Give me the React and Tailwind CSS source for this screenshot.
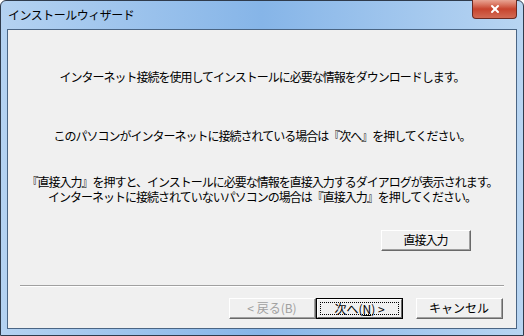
import { X } from 'lucide-react';

const FONT = { fontFamily: '"Noto Sans CJK JP", "Noto Sans", sans-serif' };

function ClassicButton({ children, disabled, isDefault, className = '' }) {
  if (isDefault) {
    return (
      <div className={`h-[21px] w-[87px] border border-black bg-[#f0f0f0] ${className}`}>
        <div className="h-full w-full border-t border-l border-t-white border-l-white border-b border-r border-b-[#696969] border-r-[#696969] p-[2px]">
          <div className="flex h-full w-full items-center justify-center border border-dotted border-black text-[12px] leading-none text-black">
            {children}
          </div>
        </div>
      </div>
    );
  }
  return (
    <div className={`h-[21px] w-[87px] border-t border-l border-t-white border-l-white border-b border-r border-b-[#696969] border-r-[#696969] bg-[#f0f0f0] ${className}`}>
      <div className="flex h-full w-full items-center justify-center border-b border-r border-b-[#a0a0a0] border-r-[#a0a0a0] text-[12px] leading-none">
        <span className={disabled ? 'text-[#a0a0a0]' : 'text-black'}>{children}</span>
      </div>
    </div>
  );
}

export default function App() {
  return (
    <div className="h-[336px] w-[524px] bg-white" style={FONT}>
      <div className="flex h-full w-full flex-col rounded-t-[6px] border border-[#2f3b4c] bg-gradient-to-r from-[#b4d2f1] via-[#86b5e8] to-[#b8d5f2]">
        {/* title bar */}
        <div className="flex h-[28px] shrink-0 items-start justify-between pl-[7px] pr-[6px]">
          <span className="mt-[7px] text-[12px] leading-[14px] tracking-[-0.5px] text-black">インストールウィザード</span>
          <div className="flex h-[19px] w-[45px] -mt-[1px] items-center justify-center rounded-b-[4px] border border-t-0 border-[#6b2a22] bg-gradient-to-b from-[#e8a493] via-[#c7432d] to-[#d26a54]">
            <X className="h-[12px] w-[12px] text-white" strokeWidth={4} />
          </div>
        </div>
        {/* client area */}
        <div className="mx-[6px] mb-[6px] flex flex-1 flex-col border border-[#4a6584] bg-[#f0f0f0]">
          <div className="flex flex-1 flex-col items-center text-[12px] leading-[14px] tracking-[-1px] text-black">
            <p className="mt-[40px]">インターネット接続を使用してインストールに必要な情報をダウンロードします。</p>
            <p className="mt-[45px]">このパソコンがインターネットに接続されている場合は『次へ』を押してください。</p>
            <p className="mt-[31px] text-center leading-[15px]">
              『直接入力』を押すと、インストールに必要な情報を直接入力するダイアログが表示されます。
              <br />
              インターネットに接続されていないパソコンの場合は『直接入力』を押してください。
            </p>
            <div className="mt-[26px] flex w-full justify-end pr-[45px]">
              <ClassicButton className="w-[90px]">直接入力</ClassicButton>
            </div>
          </div>
          <div className="mx-[12px] border-t border-b border-t-[#a0a0a0] border-b-white" />
          <div className="flex justify-end pt-[11px] pb-[9px] pr-[13px]">
            <ClassicButton disabled>&lt; 戻る(B)</ClassicButton>
            <ClassicButton isDefault>次へ(<span className="underline">N</span>) &gt;</ClassicButton>
            <ClassicButton className="ml-[13px]">キャンセル</ClassicButton>
          </div>
        </div>
      </div>
    </div>
  );
}
